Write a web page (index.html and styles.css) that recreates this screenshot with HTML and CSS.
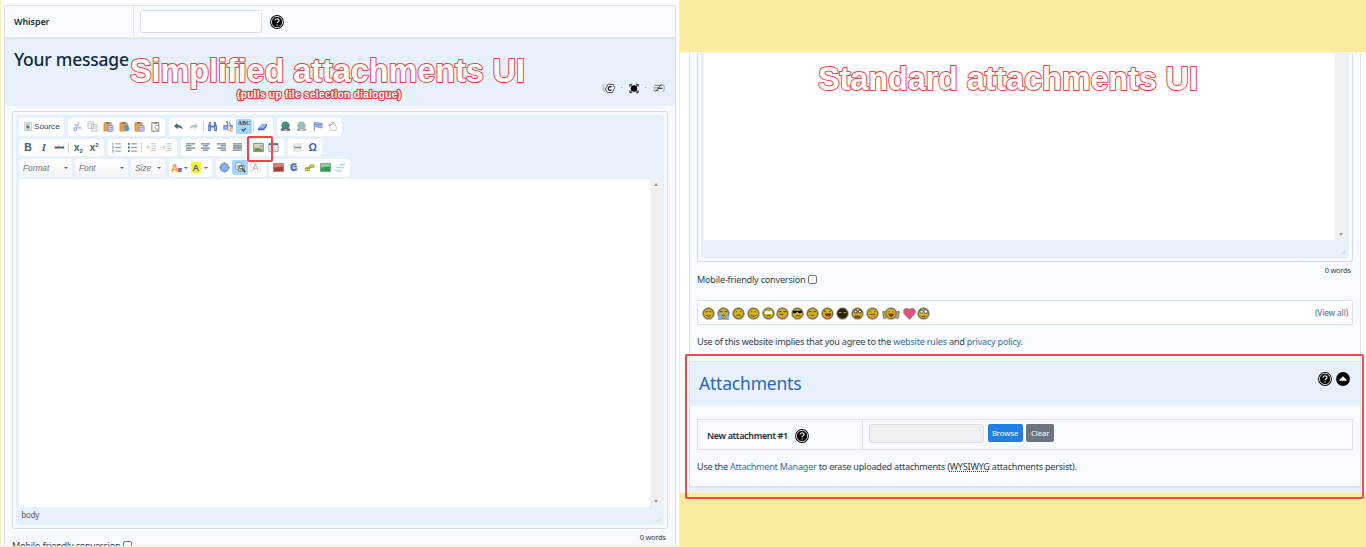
FILE: index.html
```html
<!DOCTYPE html>
<html lang="en">
<head>
<meta charset="utf-8">
<title>Attachments UI comparison</title>
<link rel="stylesheet" href="styles.css">
</head>
<body>
<svg class="defs" aria-hidden="true">
<symbol id="help" viewBox="0 0 14 14"><circle cx="7" cy="7" r="6.9" fill="#000"/><circle cx="7" cy="7" r="5.6" fill="none" stroke="#fff" stroke-width=".8"/><path d="M5 5.600C5 3.200 9 3.200 9 5.400C9 6.800 7.200 6.800 7.100 8.300M7 9.500v1.100" fill="none" stroke="#fff" stroke-width="1.200"/></symbol>
<symbol id="up" viewBox="0 0 14 14"><circle cx="7" cy="7" r="6.900"/><path d="M3.500 8.800h7v-1L7 4.200 3.500 7.800z" fill="#fff"/></symbol>
<symbol id="copyr" viewBox="0 0 12 12"><path d="M4 1.200l5.800.6L11 5.200 8.400 10.600 3 10.200 1 6.600z" fill="#fff" stroke="#222" stroke-width=".9"/><path d="M7.700 4.500C5.800 3 4.100 4.400 4.100 6s1.700 2.600 3.400 1.400" fill="none" stroke="#111" stroke-width="1.400"/></symbol>
<symbol id="expand" viewBox="0 0 12 12"><path d="M1.500 4V1.500H4M8 1.500h2.500V4M10.500 8v2.500H8M4 10.500H1.500V8M2 2l8 8M10 2l-8 8" fill="none" stroke="#222"/><circle cx="6" cy="6" r="3.500"/></symbol>
<symbol id="plain" viewBox="0 0 12 12"><path d="M2 2.500h9M1 5.300h9M1 8.100h6" stroke="#999" stroke-width="1.300"/><path d="M9.500 1.500L3.500 9.500M6 6h5" stroke="#444"/></symbol>
<symbol id="page" viewBox="0 0 12 12"><path d="M2 1h8v10H2z" fill="#f3f6f6" stroke="#a9b4b8" stroke-width=".8"/><path d="M3.500 3h5M3.500 5h2M3.500 9h5" stroke="#8da0a5"/><path d="M4 5h4v3H4z" fill="#587f84"/></symbol>
<symbol id="cut" viewBox="0 0 12 12"><path d="M7.500 1L5.500 7M3 3.500L8 8" stroke="#b5bdc7" stroke-width="1.400"/><circle cx="3.700" cy="8.800" r="1.600" fill="none" stroke="#8aa9e8" stroke-width="1.300"/><circle cx="9" cy="7.800" r="1.300" fill="none" stroke="#a4bdec"/></symbol>
<symbol id="copy" viewBox="0 0 12 12"><path d="M1 1h6v7H1zM5 4h6v7H5z" fill="#f5f6f7" stroke="#bbc1c4"/><path d="M2.500 3h3M6.500 6h3M6.500 8h3" stroke="#ccd1d3"/></symbol>
<symbol id="paste" viewBox="0 0 12 12"><path d="M1 2h8v9H1z" fill="#e4a44b" stroke="#bd8035" stroke-width=".7"/><path d="M3 1h4v2H3z" fill="#777"/><path d="M5.500 5h5.500v6H5.500z" fill="#d7e2f9" stroke="#6f80c2" stroke-width=".8"/><path d="M6.500 7h3.500M6.500 9h3.500" stroke="#7588cd" stroke-width=".8"/></symbol>
<symbol id="pastet" viewBox="0 0 12 12"><path d="M1 2h8v9H1z" fill="#e4a44b" stroke="#bd8035" stroke-width=".7"/><path d="M3 1h4v2H3z" fill="#777"/><path d="M5 5l5-1 1.500 6L7 11z" fill="#4f9ccb"/></symbol>
<symbol id="clip" viewBox="0 0 12 12"><path d="M2 2h7.500v9H2z" fill="none" stroke="#929292" stroke-width="1.200"/><path d="M4 1h4v2H4z" fill="#888"/><circle cx="7.500" cy="7" r="2.200" fill="#fff" stroke="#999"/></symbol>
<symbol id="undo" viewBox="0 0 12 12"><path d="M1 5.500l4-3.300v2.100c3.500 0 5.500 1.700 5.500 5C9 7.400 7.500 7 5 7v2z" fill="#456a73"/></symbol>
<symbol id="redo" viewBox="0 0 12 12"><path d="M11 5.500L7 2.200v2.100c-3.500 0-5.500 1.700-5.500 5C3 7.400 4.500 7 7 7v2z" fill="#bac7ca"/></symbol>
<symbol id="find" viewBox="0 0 12 12"><path d="M2.500 1h2v4h3V1h2L11 6v5H7.500V7h-3v4H1V6z" fill="#5878c7"/><path d="M2.500 6v4M9.300 6v4M4 2v2" stroke="#c2d3f5"/></symbol>
<symbol id="replace" viewBox="0 0 12 12"><path d="M3 1h2v3M7 1l1 3M1 5h4v4H1zM6 5h4v3" fill="#a9bbe8" stroke="#7189cb" stroke-width="1.300"/><path d="M5 10h3M11 8H8v3h3" stroke="#d69c54" fill="none"/></symbol>
<symbol id="spell" viewBox="0 0 12 12"><path d="M3.500 6l2.500 3L9.500 4.500" fill="none" stroke="#285767" stroke-width="1.800"/></symbol>
<symbol id="erase" viewBox="0 0 12 12"><path d="M1 8l4-5h6L7 8z" fill="#8fb5f2"/><path d="M1 8h6l4-5v2.200L7.500 10H1z" fill="#476ac1"/></symbol>
<symbol id="globe" viewBox="0 0 12 12"><circle cx="6" cy="5" r="4.500" fill="#4c78b8"/><path d="M3 2l4-1 2 3-3 3-3-1zM8 6l2-1v2z" fill="#3f9657"/><path d="M2 9.500h3M7 9.500h3" stroke="#4a5c5a" stroke-width="2.400" stroke-linecap="round"/><path d="M4 9.500h4" stroke="#ddd"/></symbol>
<symbol id="flag" viewBox="0 0 12 12"><path d="M2.500 1v10" stroke="#8e9699" stroke-width="1.200"/><path d="M3 1.500h3.500l1 1H11v5H7.500l-1-1H3z" fill="#a7bce9" stroke="#6e86c9" stroke-width=".7"/><path d="M6.800 2v5M3 4h8" stroke="#5977c3" stroke-width=".5"/></symbol>
<symbol id="bubble" viewBox="0 0 12 12"><path d="M3.500 2.500c2-2.500 6-.5 5.500 2l2 4c-2.500 2.500-6 2.500-7 1C3.500 8 1 5 3.500 2.500z" fill="#fff" stroke="#aaa" stroke-width=".8"/><path d="M2.500 5l3-1.500L8 1.500" stroke="#999" fill="none"/></symbol>
<symbol id="ol" viewBox="0 0 12 12"><path d="M4.500 2H11M4.500 6H11M4.500 10H11" stroke="#7d9397"/><path d="M2 .5v3M1 5h1.500v2H1M1 9h1.500v2H1" stroke="#66878b" fill="none" stroke-width=".8"/></symbol>
<symbol id="ul" viewBox="0 0 12 12"><path d="M4.500 2H11M4.500 6H11M4.500 10H11" stroke="#718a8f"/><path d="M1 2h2M1 6h2M1 10h2" stroke="#3f747b" stroke-width="2"/></symbol>
<symbol id="outd" viewBox="0 0 12 12"><path d="M5 2h6M6 4.500h5M6 7h5M5 9.500h6" stroke="#bcc7c9"/><path d="M4.500 5.700H1M3 3.500L1 5.700 3 8" stroke="#e6c29e" fill="none"/></symbol>
<symbol id="ind" viewBox="0 0 12 12"><path d="M5 2h6M6 4.500h5M6 7h5M5 9.500h6" stroke="#bcc7c9"/><path d="M1 5.700h3.500M2.500 3.500l2 2.200-2 2.300" stroke="#e6c29e" fill="none"/></symbol>
<symbol id="al" viewBox="0 0 12 12"><path d="M1 2h10M1 4.300h6M1 6.600h10M1 8.900h6" stroke="#71898d" stroke-width="1.300"/></symbol>
<symbol id="ac" viewBox="0 0 12 12"><path d="M1 2h10M3 4.300h6M1 6.600h10M3 8.900h6" stroke="#71898d" stroke-width="1.300"/></symbol>
<symbol id="ar" viewBox="0 0 12 12"><path d="M1 2h10M5 4.300h6M1 6.600h10M5 8.900h6" stroke="#71898d" stroke-width="1.300"/></symbol>
<symbol id="aj" viewBox="0 0 12 12"><path d="M1 2h10M1 4.300h10M1 6.600h10M1 8.900h10" stroke="#71898d" stroke-width="1.500"/></symbol>
<symbol id="img" viewBox="0 0 12 12"><path d="M.8 1.500h10.400v9H.8z" fill="#bddce6" stroke="#75815f"/><path d="M1.500 7l3-1 6 2v2h-9z" fill="#759650"/><path d="M6 5l2-2 2.500 3z" fill="#f28b38"/><path d="M1.500 3h4v2h-4z" fill="#f5de75"/></symbol>
<symbol id="table" viewBox="0 0 12 12"><path d="M1 1.500h10v9H1z" fill="#fff" stroke="#929fb1"/><path d="M1 2.500h10" stroke="#506b92" stroke-width="2"/><path d="M4.300 3v7M7.600 3v7M1 5.700h10M1 8h10" stroke="#bac4d3" stroke-width=".7"/></symbol>
<symbol id="hr" viewBox="0 0 12 12"><path d="M1 1h10v10H1z" fill="#e7eaea"/><path d="M2 6h8" stroke="#829095" stroke-width="1.500"/></symbol>
<symbol id="max" viewBox="0 0 12 12"><path d="M6 0l2 2H4zM12 6l-2 2V4zM6 12l-2-2h4zM0 6l2-2v4z" fill="#7696bd"/><rect x="2" y="2" width="8" height="8" rx="2" fill="#89b4ed" stroke="#6386be"/></symbol>
<symbol id="blocks" viewBox="0 0 12 12"><path d="M1 1h6v7H1z" fill="#fff" stroke="#93a0a7"/><path d="M3 4h7v6H4z" fill="#d8dfdd" stroke="#687c82"/><path d="M7 6l4 5" stroke="#344f59" stroke-width="1.600"/><circle cx="6.500" cy="6" r="1.700" fill="#fff" stroke="#344f59"/></symbol>
<symbol id="sela" viewBox="0 0 12 12"><path d="M1 1h10v10H1z" fill="none" stroke="#bbb" stroke-dasharray="1 1"/><path d="M3 9l3-7 3 7M4 7h4" fill="none" stroke="#bbb" stroke-width="1.200"/></symbol>
<symbol id="red" viewBox="0 0 12 12"><path d="M.5 1.500h11v9H.5z" fill="#a44035" stroke="#8c8a83" stroke-width=".7"/><path d="M1 2h10v3L1 6z" fill="#d08478"/></symbol>
<symbol id="green" viewBox="0 0 12 12"><path d="M.5 1.500h11v9H.5z" fill="#319950" stroke="#7c9483" stroke-width=".7"/><path d="M1 2h10v3L1 6z" fill="#91cda0"/></symbol>
<symbol id="media" viewBox="0 0 12 12"><path d="M1 2l8-1 2 8-7 2z" fill="#c4d4ed"/><path d="M9 3C5 1 3 4 4 7s5 2 5 0" fill="none" stroke="#466bb8" stroke-width="2"/><path d="M6 5h4" stroke="#846ca0" stroke-width="1.300"/></symbol>
<symbol id="ticket" viewBox="0 0 12 12"><path d="M.5 6l4.500-.5L6 3l5-.5.500 3.500-4.500.5-1 3-4.500.5z" fill="#a2a832"/><path d="M2 8h3M7 4.500h3" stroke="#e6e77c"/></symbol>
<symbol id="bars" viewBox="0 0 12 12"><path d="M5 2.500c2 2 3-1 6 0M1 6c3-1 4 1 9 0M0 9.500c3-1 4 1 7 0" fill="none" stroke="#b4dcf5" stroke-width="1.900"/></symbol>
<symbol id="face" viewBox="0 0 14 14"><circle cx="7" cy="7" r="6.800" fill="#a5a6a2"/><circle cx="7" cy="7" r="5.500" fill="#d3af22" stroke="#655b22" stroke-width=".9"/></symbol>
</svg>

<main class="compare">
<section class="pane simple">
  <div class="card">
    <div class="whisper"><div class="label">Whisper</div><div class="field"><span class="input"></span><svg class="ico14"><use href="#help"/></svg></div></div>
    <header class="message"><h1>Your message</h1>
      <div class="tools"><i>(</i><svg><use href="#copyr"/></svg><i>·</i><svg><use href="#expand"/></svg><i>·</i><svg><use href="#plain"/></svg><i>)</i></div>
    </header>
    <div class="editor full">
      <div class="shell">
        <div class="bar">
          <div class="group g45 source"><svg><use href="#page"/></svg><span>Source</span></div>
          <div class="group g97"><b><svg><use href="#cut"/></svg></b><b><svg><use href="#copy"/></svg></b><b><svg><use href="#paste"/></svg></b><b><svg><use href="#pastet"/></svg></b><b><svg><use href="#paste"/></svg></b><b><svg><use href="#clip"/></svg></b></div>
          <div class="group g104"><b><svg><use href="#undo"/></svg></b><b><svg><use href="#redo"/></svg></b><s></s><b><svg><use href="#find"/></svg></b><b><svg><use href="#replace"/></svg></b><b class="on abc"><em>ABC</em><svg><use href="#spell"/></svg></b><s></s><b><svg><use href="#erase"/></svg></b></div>
          <div class="group g65"><b><svg><use href="#globe"/></svg></b><b class="dim"><svg><use href="#globe"/></svg></b><b><svg><use href="#flag"/></svg></b><b><svg><use href="#bubble"/></svg></b></div>
        </div>
        <div class="bar">
          <div class="group g84"><b class="glyph">B</b><b class="glyph it">I</b><b class="glyph strike">abc</b><s></s><b class="glyph">x<sub>2</sub></b><b class="glyph">x<sup>2</sup></b></div>
          <div class="group g69"><b><svg><use href="#ol"/></svg></b><b><svg><use href="#ul"/></svg></b><s></s><b><svg><use href="#outd"/></svg></b><b><svg><use href="#ind"/></svg></b></div>
          <div class="group g64"><b><svg><use href="#al"/></svg></b><b><svg><use href="#ac"/></svg></b><b><svg><use href="#ar"/></svg></b><b><svg><use href="#aj"/></svg></b></div>
          <div class="group g35"><b class="marked"><svg><use href="#img"/></svg></b><b><svg><use href="#table"/></svg></b></div>
          <div class="group g34"><b><svg><use href="#hr"/></svg></b><b class="glyph omega">Ω</b></div>
        </div>
        <div class="bar formats">
          <div class="combo g53">Format<u></u></div><div class="combo g53">Font<u></u></div><div class="combo g34">Size<u></u></div>
          <div class="group g44 colors"><b class="glyph tc">A<i></i></b><u></u><b class="glyph bg">A</b><u></u></div>
          <div class="group g50"><b><svg><use href="#max"/></svg></b><b class="on"><svg><use href="#blocks"/></svg></b><b><svg><use href="#sela"/></svg></b></div>
          <div class="group g81"><b><svg><use href="#red"/></svg></b><b><svg><use href="#media"/></svg></b><b><svg><use href="#ticket"/></svg></b><b><svg><use href="#green"/></svg></b><b><svg><use href="#bars"/></svg></b></div>
        </div>
        <div class="sheet"><div class="scroll"><u class="upw"></u><u></u></div></div>
        <footer class="path"><span>body</span><i class="grip"></i></footer>
      </div>
    </div>
    <div class="words">0 words</div>
    <div class="mobile"><span>Mobile-friendly conversion</span><i></i></div>
  </div>
  <svg class="callout" viewBox="0 0 404 54"><text x="3" y="31.500" textLength="395" class="big">Simplified attachments UI</text><text x="110" y="48" textLength="164" class="small">(pulls up file selection dialogue)</text></svg>
</section>

<section class="pane standard">
  <div class="card">
    <div class="editor tail"><div class="shell"><div class="sheet"><div class="scroll"><u></u></div></div><footer class="path"><i class="grip"></i></footer></div></div>
    <div class="words">0 words</div>
    <div class="mobile"><span>Mobile-friendly conversion</span><i></i></div>
    <div class="smilies">
      <div class="faces">
      <svg viewBox="0 0 14 14"><use href="#face"/><path d="M4 5h2M8 5h2M4.500 8.500c1 2 4 2 5 0" class="ln"/></svg>
      <svg viewBox="0 0 14 14"><use href="#face"/><path d="M2 6h3v8H1zM9 6h3l1 8H9z" fill="#82a9ed"/><path d="M3 5h3M8 5h3M5 10c1-2 3-2 4 0" class="ln"/></svg>
      <svg viewBox="0 0 14 14"><use href="#face"/><path d="M4 5h1M9 5h1M4.500 10c1-2 4-2 5 0" class="ln"/></svg>
      <svg viewBox="0 0 14 14"><use href="#face"/><path d="M4.500 5h1M8.500 5h1M4 8.500c1 2 5 2 6 0" class="ln"/></svg>
      <svg viewBox="0 0 14 14"><use href="#face"/><path d="M3 4.500h8v3H3z" fill="#fff"/><path d="M5 9.500h4" class="ln"/></svg>
      <svg viewBox="0 0 14 14"><use href="#face"/><path d="M3 5h3M8 5h3M4 8h5" class="ln"/><path d="M7 8h4v3H7z" fill="#ed9140"/></svg>
      <svg viewBox="0 0 14 14"><use href="#face"/><path d="M2 4h10v2L9 7 7 5 4 7 2 6z"/><path d="M5 9.500h5" class="ln"/></svg>
      <svg viewBox="0 0 14 14"><use href="#face"/><path d="M3 5h3M8 5h3M5 9h4" class="ln"/></svg>
      <svg viewBox="0 0 14 14"><use href="#face"/><path d="M3 4l2 1M11 4L9 5" class="ln"/><path d="M4 7h7c0 5-6 5-7 0" fill="#732c1a"/><path d="M5 10h4" stroke="#ef6d54"/></svg>
      <svg viewBox="0 0 14 14"><use href="#face"/><circle cx="7" cy="7" r="5.500" fill="#282412"/><path d="M3 6h3M8 6h3" stroke="#c7a23b"/></svg>
      <svg viewBox="0 0 14 14"><use href="#face"/><circle cx="5" cy="5" r="1.500" fill="#fff" stroke="#222"/><circle cx="9.500" cy="5" r="1.500" fill="#fff" stroke="#222"/><path d="M4 9h6v3H4z" fill="#77511e"/></svg>
      <svg viewBox="0 0 14 14"><use href="#face"/><path d="M4 5h1M9 5h1M4 8h6" class="ln"/><path d="M6 8h3v3H6z" fill="#ef6d64"/></svg>
      <svg class="wide" viewBox="0 0 20 14"><path d="M1 5h4v7H2zM15 5h4l-1 7h-3z" fill="#c2a13a" stroke="#777"/><use href="#face" x="3" width="14" height="14"/><path d="M7.500 5h1M11.500 5h1" class="ln"/><path d="M7 7h6c0 5-5 5-6 0" fill="#8d3320"/></svg>
      <svg viewBox="0 0 14 14"><path d="M7 13.500L1 7C-1 2 4 0 7 2.500 10 0 15 2 13 7z" fill="#de5179" stroke="#a2929a"/></svg>
      <svg viewBox="0 0 14 14"><use href="#face"/><circle cx="5" cy="5" r="1.600" fill="#fff" stroke="#555"/><circle cx="9.500" cy="5" r="2" fill="#fff" stroke="#555"/><path d="M5 10h4" class="ln"/></svg>
      </div><a>(View all)</a>
    </div>
    <p class="terms">Use of this website implies that you agree to the <a>website rules</a> and <a>privacy policy</a>.</p>
    <header class="attach"><h2>Attachments</h2><div><svg class="ico14"><use href="#help"/></svg><svg class="ico14"><use href="#up"/></svg></div></header>
    <div class="upload"><div class="label"><span>New attachment #1</span><svg class="ico14"><use href="#help"/></svg></div><div class="field"><span class="input off"></span><button class="browse">Browse</button><button class="clear">Clear</button></div></div>
    <p class="manage">Use the <a>Attachment Manager</a> to erase uploaded attachments (<abbr>WYSIWYG</abbr> attachments persist).</p>
    <div class="next"></div>
  </div>
  <svg class="callout" viewBox="0 0 390 44"><text x="2" y="33" textLength="380" class="big">Standard attachments UI</text></svg>
  <div class="highlight"></div>
</section>
</main>
</body>
</html>
```
FILE: styles.css
```css
* { box-sizing: border-box; }
body { margin: 0; width: 1366px; height: 547px; overflow: hidden; font: 9.1px/14px "Noto Sans", sans-serif; color: #33424d; background: #fff; }
h1, h2, p { margin: 0; font-weight: 400; }
i, em { font-style: normal; }
b, s, u { text-decoration: none; }
a { color: #3c6da4; }
svg { display: block; flex: none; }
.defs { position: absolute; width: 0; height: 0; }
.ln { fill: none; stroke: #433b12; }
.ico14 { width: 14px; height: 14px; }

.compare { display: grid; grid-template-columns: 680px 686px; height: 547px; }
.pane { position: relative; overflow: hidden; }
.simple { border: 1px solid #fbf0b9; border-top: 0; height: 547px; padding: 5px 3px 0; }
.standard { background: #f9eca0; padding: 52.5px 0 54px; }
.card { background: #f7fbff; border: 1px solid #dfe3e7; }
.simple .card { height: 560px; }
.standard .card { height: 440.5px; border-width: 0 1px; overflow: hidden; box-shadow: 0 0 0 12px #fff; clip-path: inset(0 -12px); margin: 0 5px 0 9px; }

.whisper { display: flex; height: 33px; border-bottom: 2px solid #e1e6eb; }
.label { display: flex; align-items: center; color: #1c2d3c; font-weight: 600; font-size: 9px; letter-spacing: -.1px; }
.whisper .label { width: 129px; padding-left: 9px; border-right: 1px solid #e3e7ea; }
.field { display: flex; align-items: center; }
.input { border: 1px solid #dadde1; border-radius: 3px; background: #fff; }
.whisper .input { width: 122px; height: 23px; margin: 0 8px 0 6px; }

.message { display: flex; justify-content: space-between; height: 67px; padding: 8px 10px 0 9px; background: #e7f1fc; }
h1 { font-size: 17.5px; line-height: 24px; font-weight: 500; letter-spacing: -.23px; color: #11283e; }
.tools { display: flex; align-items: center; gap: 4.5px; height: 12px; margin-top: 35px; color: #999; }
.tools svg { width: 12px; height: 11px; }
.tools i { width: 3px; text-align: center; }
.tools i:first-child { margin-right: -6px; }
.tools i:last-child { margin-left: -6px; }

.editor { border: 1px solid #d8dde1; border-radius: 3px; padding: 3px; }
.full { height: 418px; margin: 5px 7px 0; }
.shell { display: flex; flex-direction: column; height: 100%; background: #e7f1fc; border-radius: 3px; }
.full .shell { padding: 3px 3px 0; }
.bar { display: flex; gap: 4px; height: 17.5px; margin-bottom: 3px; }
.formats { gap: 3.500px; margin-bottom: 2.500px; }
.group, .combo { display: flex; align-items: center; flex: none; background: #fff; border-radius: 3px; padding-left: 1.2px; }
.group b { display: flex; align-items: center; justify-content: center; width: 15.7px; height: 15px; flex: none; border-radius: 2px; }
.group svg { width: 11px; height: 11px; }
.group s { width: 1px; height: 11px; margin: 0 1.1px; background: #d3d6d8; }
.group .on { background: #a5d5fa; }
.g34 { width: 34px; } .g35 { width: 35px; } .g44 { width: 43.5px; } .g45 { width: 45px; } .g50 { width: 50px; } .g53 { width: 52.5px; } .g64 { width: 64px; } .g65 { width: 65px; } .g69 { width: 69.5px; } .g81 { width: 81px; } .g84 { width: 84.5px; } .g97 { width: 97px; } .g104 { width: 103.7px; }
.source { padding-left: 4px; gap: 1px; font: 8.1px "Liberation Sans", sans-serif; }
.source svg { width: 10px; }
.abc { flex-direction: column; }
.abc em { font: 700 6px/6px "Liberation Serif", serif; height: 5px; }
.group .abc svg { height: 8px; }
.dim { opacity: .55; }
.group .glyph { font: 700 10.5px "Liberation Sans", sans-serif; color: #45636a; }
.group .it { font-family: "Liberation Serif", serif; font-style: italic; }
.group .strike { font-size: 6px; text-decoration: line-through; font-weight: 400; }
.glyph sub, .glyph sup { font-size: 6px; line-height: 7px; }
.glyph sub { align-self: flex-end; }
.glyph sup { align-self: flex-start; margin-top: 2px; }
.group .omega { color: #4560bb; }
.marked { position: relative; }
.marked::after { content: ""; position: absolute; left: -3px; top: -4px; width: 22px; height: 22px; border: 2px solid #ee4648; border-radius: 2px; }
.combo { justify-content: space-between; padding: 0 4px; background: linear-gradient(#fff, #f1f3f4); font: italic 8.3px "Liberation Sans", sans-serif; color: #777; }
u { width: 0; border: 2.2px solid transparent; border-top: 2.8px solid #666; border-bottom: 0; }
.colors .tc { color: #f39b35; width: 14px; }
.tc i { width: 4px; height: 4px; align-self: flex-end; margin-bottom: 3px; background: conic-gradient(#5873d0 25%, #4cb762 0 50%, #dd5252 0 75%, #e55bb1 0); }
.colors .bg { background: #f8ef42; width: 10px; height: 11px; margin: 0 3px 0 3px; border-radius: 0; font-size: 9px; }
.sheet { display: flex; justify-content: flex-end; background: #fff; }
.full .sheet { height: 328px; }
.scroll { width: 11px; background: #f0f0f0; display: flex; flex-direction: column; justify-content: space-between; align-items: center; padding: 4px 0; }
.scroll u { border-width: 3px 2.500px 0; border-top-color: #999; }
.scroll .upw { transform: rotate(180deg); }
.scroll u:only-child { margin-top: auto; }
.path { display: flex; justify-content: space-between; flex: 1; padding: 0 0 0 2.500px; font: 8.3px/16px "Liberation Sans", sans-serif; color: #555; }
.grip { width: 6px; height: 6px; align-self: center; margin: 5px 0 0 auto; background: linear-gradient(135deg, transparent 50%, #dde5ee 50%); }
.words { font-size: 7.5px; line-height: 14px; text-align: right; letter-spacing: -.3px; }
.simple .words { padding: 1px 9.500px 0; }
.mobile { display: flex; align-items: center; gap: 3px; padding-left: 7px; letter-spacing: -.21px; }
.mobile i { width: 9px; height: 9px; border: 1px solid #777; border-radius: 2px; background: #fff; margin-top: -2px; }
.simple .mobile { margin-top: -5px; }

.tail { height: 209.5px; margin: 0 7px; border-top: 0; border-radius: 0 0 3px 3px; padding-top: 0; }
.tail .shell { border-radius: 0 0 3px 3px; padding: 0 3px; }
.tail .sheet { height: 187.500px; }
.standard .words { padding: 1px 9.500px 0; }
.standard .mobile { margin-top: -4px; }
.smilies { display: flex; align-items: center; justify-content: space-between; height: 25px; margin: 13px 7px 0; padding: 0 4px; border: 1px solid #dde2e5; border-radius: 2px; background: #fff; }
.smilies > a { font-size: 8.4px; letter-spacing: -.15px; }
.faces { display: flex; gap: 1.900px; padding-top: 1px; }
.faces svg { width: 13px; height: 13px; }
.faces .wide { width: 20px; }
.terms { padding: 9.500px 7px 0; height: 36px; letter-spacing: -.235px; }
.attach { display: flex; justify-content: space-between; height: 45px; padding: 10px 10px 0 9px; border-top: 1px solid #dfe5ea; background: #e7f1fc; }
h2 { color: #2769b4; font-size: 17.5px; line-height: 23px; letter-spacing: -.2px; }
.attach div { display: flex; gap: 4.500px; }
.upload { display: flex; height: 31px; margin: 13px 7px 0; border: 1px solid #dfe3e7; }
.upload .label { width: 165px; gap: 7px; padding: 2px 0 0 9px; border-right: 1px solid #dfe3e7; letter-spacing: -.35px; }
.upload .field { padding-left: 6px; gap: 3.600px; margin-top: -3px; }
.off { width: 115px; height: 19px; background: #eff0f1; }
button { height: 18px; padding: 0; border: 0; border-radius: 2px; color: #fff; font: 7.8px "Noto Sans", sans-serif; letter-spacing: -.1px; }
.browse { width: 35px; background: #2080e2; }
.clear { width: 28px; background: #6c757d; }
.manage { padding: 10px 7px 0; height: 36px; letter-spacing: -.24px; }
abbr { text-decoration: underline dotted; }
.next { height: 20px; border-top: 2px solid #e0e5e9; background: #e7f1fc; }

.callout { position: absolute; overflow: visible; }
.simple .callout { left: 126px; top: 50px; width: 404px; height: 54px; }
.standard .callout { left: 136px; top: 57px; width: 390px; height: 44px; }
.callout text { font-family: "Liberation Sans", sans-serif; font-weight: 700; fill: #fff; stroke: #ee4144; paint-order: stroke; stroke-linejoin: round; }
.callout .big { font-size: 32.500px; stroke-width: 2px; }
.callout .small { font-size: 10px; stroke-width: 2.4px; }
.highlight { position: absolute; left: 5px; top: 354px; width: 679px; height: 145px; border: 2px solid #ef4b4c; border-radius: 2px; }
```
